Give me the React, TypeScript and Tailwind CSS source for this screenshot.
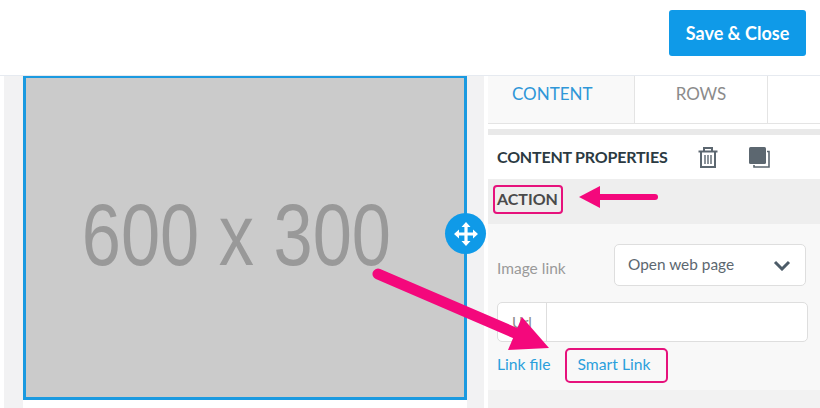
import React from 'react';

const MoveIcon = () => (
  <svg width="26" height="26" viewBox="0 0 26 26" fill="white">
    <path d="M13 1 L17.5 6 H14.6 V11.4 H20 V8.5 L25 13 L20 17.5 V14.6 H14.6 V20 H17.5 L13 25 L8.5 20 H11.4 V14.6 H6 V17.5 L1 13 L6 8.5 V11.4 H11.4 V6 H8.5 Z" />
  </svg>
);

const TrashIcon = () => (
  <svg width="20" height="21" viewBox="0 0 20 21" fill="none" stroke="#5c6770" strokeWidth="2">
    <path d="M0.5 4.5 H19.5" />
    <path d="M6 4 V1 H14 V4" />
    <path d="M3 5 V20 H17 V5" />
    <path d="M7 8 V17 M10 8 V17 M13 8 V17" strokeWidth="1.4" />
  </svg>
);

const CopyIcon = () => (
  <svg width="21" height="21" viewBox="0 0 21 21">
    <rect x="0" y="0" width="17" height="17" rx="1.5" fill="#5c6770" />
    <path d="M18 4.5 H20 V20 H5 V18" fill="none" stroke="#5c6770" strokeWidth="1.6" />
  </svg>
);

const Chevron = () => (
  <svg width="18" height="11" viewBox="0 0 18 11" fill="none" stroke="#4d5c68" strokeWidth="3">
    <path d="M2 2 L9 9 L16 2" />
  </svg>
);

export default function App() {
  return (
    <div className="relative w-[820px] h-[408px] overflow-hidden bg-white font-['Lato','Open_Sans',sans-serif]">
      {/* top bar */}
      <div className="h-[76px] flex justify-end items-start pt-[10px] pr-[14px] border-b border-[#e6eaf0]">
        <button className="w-[137px] h-[46px] rounded-[3px] bg-[#0f9ae8] text-white text-[18px] font-bold">
          Save &amp; Close
        </button>
      </div>

      <div className="flex h-[332px] pl-[4px]">
        {/* canvas */}
        <div className="relative w-[480px] h-full bg-[#f2f2f3] pl-[19px] pr-[17px] shrink-0">
          <div className="h-[325px] bg-white">
            <div className="h-[324px] w-[444px] border-[3px] border-t-2 border-[#1b9ae0] bg-[#cbcbcb] flex items-center justify-center">
              <span className="inline-block whitespace-nowrap scale-x-80 text-[#999999] text-[88px] font-['Liberation_Sans',sans-serif] blur-[0.6px] leading-none pb-[6px] pr-[21px]">
                600 x 300
              </span>
            </div>
          </div>
          <div className="h-[8px] ml-0 bg-white" />
          <div className="absolute left-[441px] top-[137px] w-[41px] h-[41px] rounded-full bg-[#0f9ae8] flex items-center justify-center">
            <MoveIcon />
          </div>
        </div>

        {/* side panel */}
        <div className="ml-[4px] flex-1 flex flex-col">
          <div className="flex h-[48px] border-b border-[#e4e4e4]">
            <div className="w-[146px] bg-[#f9f9f9] text-[#2f97d8] text-[17px] pl-[24px] pt-[5px]">CONTENT</div>
            <div className="w-[134px] border-l border-r border-[#e4e4e4] text-[#8b8b8b] text-[17px] text-center pt-[5px]">ROWS</div>
          </div>
          <div className="h-[5px]" />
          <div className="h-[6px] bg-[#e9e9e9]" />
          <div className="h-[44px] flex items-center pl-[9px] bg-white">
            <span className="text-[#2b3a42] text-[16px] font-bold w-[201px] tracking-[-0.2px]">CONTENT PROPERTIES</span>
            <TrashIcon />
            <span className="w-[31px]" />
            <CopyIcon />
          </div>
          <div className="h-[45px] bg-[#eeeeee] flex items-center pl-[9px] pb-[5px]">
            <span className="text-[#4a4a4a] text-[16px] font-bold">ACTION</span>
          </div>
          <div className="h-[166px] bg-[#f8f8f8] pl-[9px] pr-[14px] pt-[20px] flex flex-col">
            <div className="flex items-center">
              <span className="w-[117px] text-[15.5px] text-[#9a9a9a] pt-[7px]">Image link</span>
              <div className="flex-1 h-[42px] bg-white border border-[#dedede] rounded-[5px] flex items-center justify-between pl-[13px] pr-[14px]">
                <span className="text-[15.4px] text-[#5c6770]">Open web page</span>
                <Chevron />
              </div>
            </div>
            <div className="mt-[16px] h-[40px] bg-white border border-[#dedede] rounded-[5px] flex -mr-[2px]">
              <span className="w-[49px] border-r border-[#dedede] text-[15px] text-[#8a8a8a] flex items-center justify-center">Url</span>
            </div>
            <div className="mt-[11px] flex items-center text-[15.7px] text-[#2b9fdc]">
              <span>Link file</span>
              <span className="ml-[27px]">Smart Link</span>
            </div>
          </div>
          <div className="flex-1 bg-[#f2f2f2]" />
        </div>
      </div>

      {/* annotation boxes */}
      <div className="absolute left-[493px] top-[185px] w-[70px] h-[29px] border-[2.5px] border-[#e6127c] rounded-[4px]" />
      <div className="absolute left-[565px] top-[348px] w-[103px] h-[35px] border-[2.5px] border-[#e6127c] rounded-[5px]" />

      {/* annotation arrows */}
      <svg className="absolute left-0 top-0" width="820" height="408" viewBox="0 0 820 408" fill="#f4087c">
        <path d="M655 197 L595 197" stroke="#f4087c" strokeWidth="6" strokeLinecap="round" />
        <path d="M579 197 L600 186 L600 208 Z" />
        <path d="M378 274 L515 333" stroke="#f4087c" strokeWidth="11" strokeLinecap="round" />
        <path d="M549 348 L522 317 L508 350 Z" />
      </svg>
    </div>
  );
}
